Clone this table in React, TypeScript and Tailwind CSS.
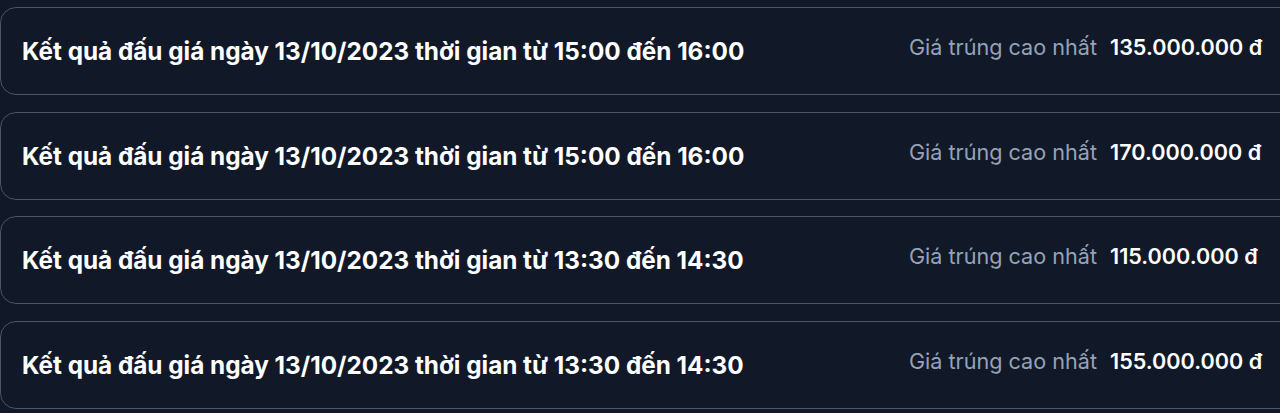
import React from "react";

type KetQua = {
  id: number;
  ngay: string;
  tu: string;
  den: string;
  gia: string;
};

const ketQuaList: KetQua[] = [
  { id: 1, ngay: "13/10/2023", tu: "15:00", den: "16:00", gia: "135.000.000" },
  { id: 2, ngay: "13/10/2023", tu: "15:00", den: "16:00", gia: "170.000.000" },
  { id: 3, ngay: "13/10/2023", tu: "13:30", den: "14:30", gia: "115.000.000" },
  { id: 4, ngay: "13/10/2023", tu: "13:30", den: "14:30", gia: "155.000.000" },
];

function App() {
  return (
    <div
      className="w-screen h-[413px] overflow-hidden bg-[#111827] text-white"
      style={{ fontFamily: "Inter, 'Noto Sans', sans-serif" }}
    >
      <div className="flex flex-col gap-[16.7px] pt-[7px] w-[1300px]">
        {ketQuaList.map((item) => (
          <div
            key={item.id}
            className="flex flex-row items-center h-[88px] rounded-2xl border border-[#4b5563] bg-[#111827] pl-[21px]"
          >
            <span className="flex-1 text-[24.3px] font-bold leading-8 text-white">
              Kết quả đấu giá ngày {item.ngay} thời gian từ {item.tu} đến {item.den}
            </span>
            <div className="flex flex-row items-center w-[390px] mb-[8px]">
              <span className="text-[21.6px] leading-8 text-[#94a3b8]">
                Giá trúng cao nhất
              </span>
              <span className="ml-[13px] text-[21.6px] font-semibold leading-8 text-white">
                {item.gia} đ
              </span>
            </div>
          </div>
        ))}
      </div>
    </div>
  );
}

export default App;
